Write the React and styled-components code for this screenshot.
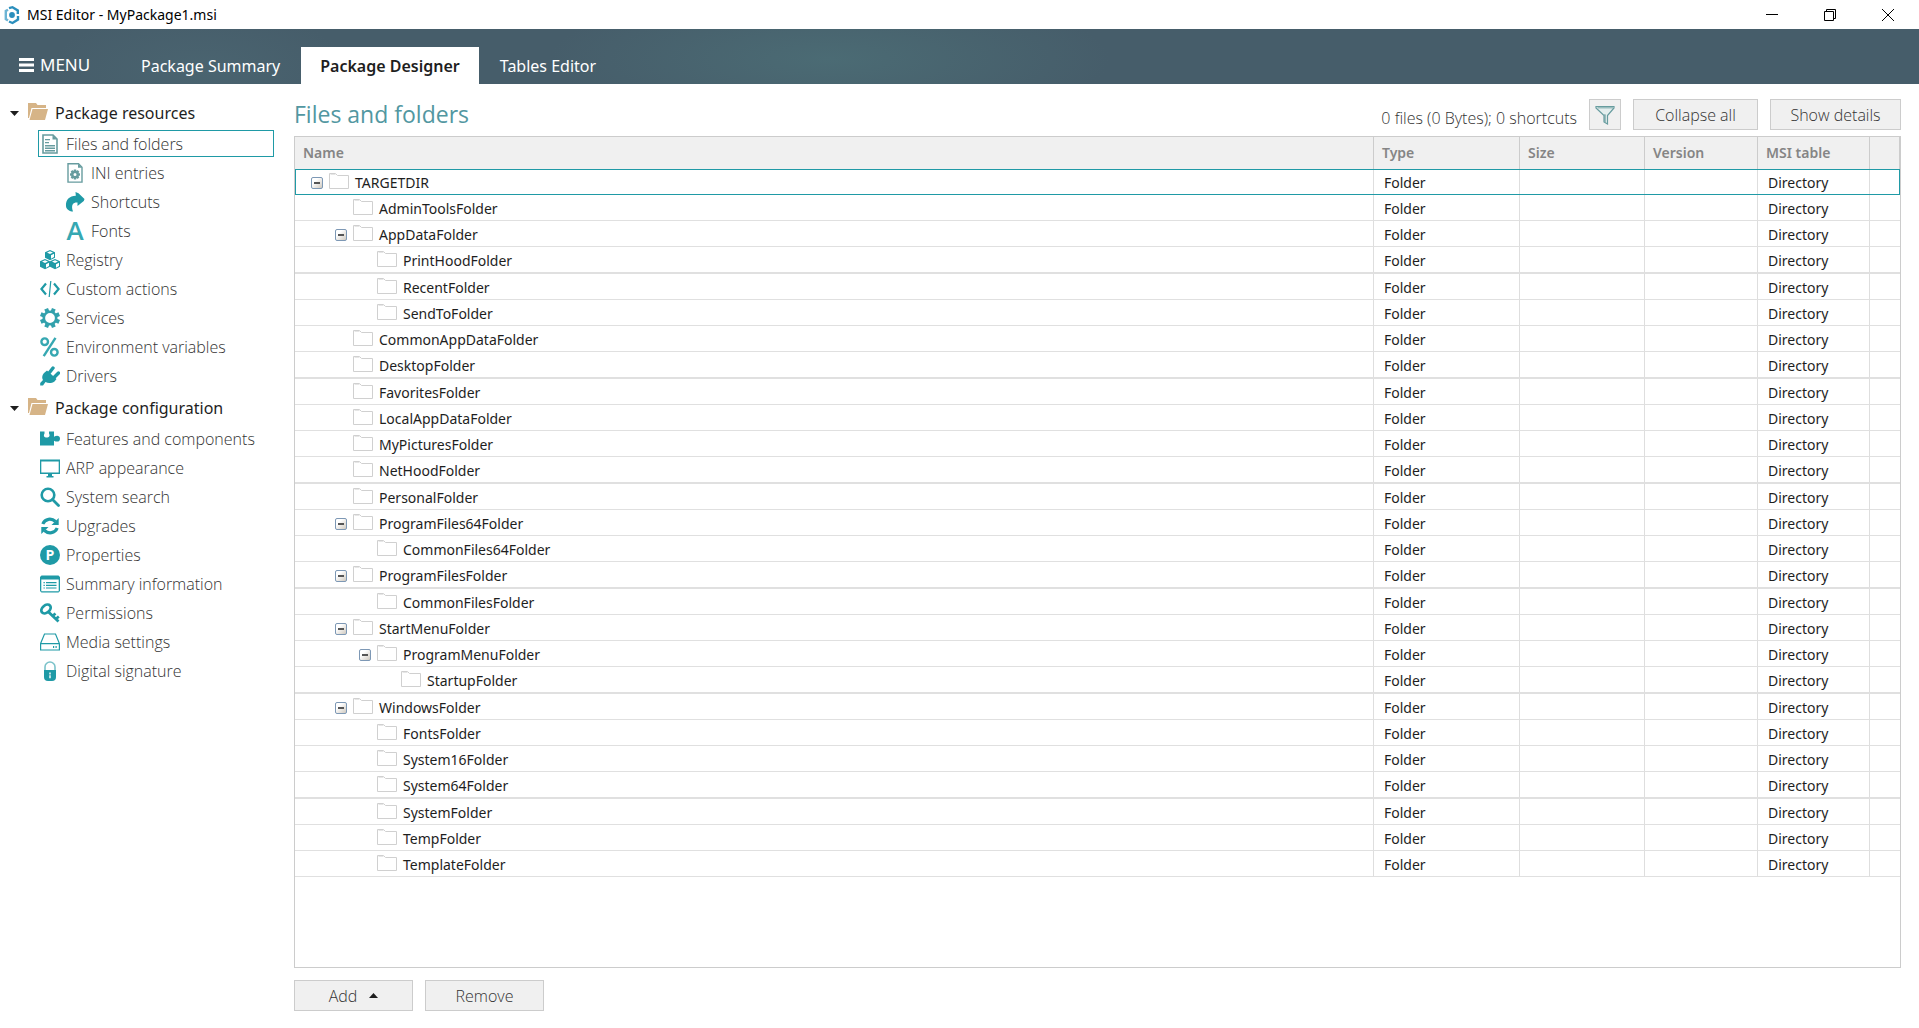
import React from "react";
import styled, { createGlobalStyle, css } from "styled-components";

const teal = "#1f9aa6";
const muted = "#679c9f";
const line = "#cccccc";
const regular = `"Noto Sans", "Open Sans", sans-serif`;
const light = `"Open Sans", "Noto Sans", sans-serif`;

const GlobalStyle = createGlobalStyle`
  * { box-sizing: border-box; }
  body { margin: 0; background: #fff; color: #1e1e1e; font: 400 14px/20px ${regular}; }
  button { font: inherit; color: inherit; padding: 0; border: 0; background: none; }
  svg { display: block; flex: none; }
`;

/* ---------- window frame ---------- */

const Window = styled.div`
  display: flex;
  flex-direction: column;
  min-height: 100vh;
`;

const TitleBar = styled.div`
  display: flex;
  align-items: center;
  gap: 7px;
  height: 29px;
  padding: 0 2px 0 4px;
  color: #000;
`;

const WindowTitle = styled.span`
  flex: 1;
`;

const WindowControls = styled.div`
  display: flex;
  align-self: stretch;
`;

const WindowButton = styled.button`
  display: flex;
  align-items: center;
  justify-content: center;
  width: 58px;
`;

const Ribbon = styled.header`
  display: flex;
  align-items: flex-end;
  height: 55px;
  background:
    radial-gradient(ellipse 280px 70px at 830px 30px, #4b6b74, #4b6b7400),
    radial-gradient(ellipse 150px 60px at 200px 40px, #4a6470, #4a647000),
    #465d6a;
  color: #fff;
`;

const MenuButton = styled.button`
  display: flex;
  align-items: center;
  gap: 6px;
  width: 122px;
  height: 39px;
  padding-left: 19px;
  font-size: 17px;
`;

const Tabs = styled.nav`
  display: flex;
  gap: 2px;
`;

const Tab = styled.a`
  height: 37px;
  padding: 1px 19px 0 19px;
  font-size: 16px;
  line-height: 36px;
  text-decoration: none;
  color: ${(p) => (p.$active ? "#1e1e1e" : "#fff")};
  background: ${(p) => (p.$active ? "#fff" : "transparent")};
  font-weight: ${(p) => (p.$active ? 600 : 400)};
`;

const Body = styled.div`
  display: flex;
  flex: 1;
`;

/* ---------- sidebar ---------- */

const Sidebar = styled.nav`
  flex: 0 0 294px;
  padding-top: 13px;
`;

const Group = styled.section`
  & + & { margin-top: 2px; }
`;

const GroupHeader = styled.button`
  display: flex;
  align-items: center;
  height: 32px;
  padding-left: 10px;
  font-size: 16px;
`;

const FolderSlot = styled.span`
  padding: 0 7px 4px 9px;
`;

const NavList = styled.ul`
  margin: 0;
  padding: 0 20px 0 38px;
  list-style: none;
`;

const NavItem = styled.li`
  display: flex;
  align-items: center;
  height: 29px;
`;

const NavLink = styled.a`
  display: flex;
  flex: 1;
  align-items: center;
  gap: 6px;
  height: 27px;
  padding-left: ${(p) => (p.$nested ? 26 : 1)}px;
  border: 1px solid ${(p) => (p.$active ? teal : "transparent")};
  color: #333;
  font: 300 16px/24px ${light};
  text-decoration: none;
`;

/* ---------- content ---------- */

const Content = styled.main`
  display: flex;
  flex: 1;
  flex-direction: column;
  min-width: 0;
  padding: 15px 18px 17px 0;
`;

const Toolbar = styled.div`
  display: flex;
  gap: 12px;
  height: 31px;
  margin-bottom: 6px;
`;

const Heading = styled.h1`
  flex: 1;
  margin: 0;
  color: #5297a1;
  font: 400 23px/31px ${light};
`;

const Summary = styled.p`
  align-self: flex-end;
  margin: 0;
  color: #333;
  font: 300 16px/24px ${light};
`;

const Button = styled.button`
  display: flex;
  align-items: center;
  justify-content: center;
  gap: 12px;
  width: ${(p) => p.$width}px;
  height: 31px;
  border: 1px solid ${line};
  background: #f0f0f0;
  && { font: 300 16px/24px ${light}; color: #333; }
`;

const Grid = styled.div`
  flex: 1;
  border: 1px solid ${line};
`;

const Table = styled.table`
  width: 100%;
  table-layout: fixed;
  border-collapse: separate;
  border-spacing: 0;
`;

const Col = styled.col`
  width: ${(p) => (p.$width ? `${p.$width}px` : "auto")};
`;

const HeadCell = styled.th`
  height: 32px;
  padding: 0 8px;
  border-right: 1px solid ${line};
  background: #f0f0f0;
  color: #858585;
  font-weight: 600;
  text-align: left;
`;

const Row = styled.tr`
  height: 26px;
  &:nth-child(4n) { height: 27px; }
  &:nth-child(4n) > td { border-bottom-width: 2px; }
  ${(p) =>
    p.$selected &&
    css`
      outline: 1px solid ${teal};
      outline-offset: -1px;
    `}
`;

const Cell = styled.td`
  padding: 2px 10px 0;
  border-right: 1px solid #dedede;
  border-bottom: 1px solid #e0e0e0;
  &:last-child { border-right: 0; }
`;

const NameCell = styled.div`
  display: flex;
  align-items: center;
  padding-left: ${(p) => p.$level * 24 + 6}px;
`;

const Expander = styled.button`
  display: flex;
  align-items: center;
  justify-content: center;
  width: 12px;
  height: 12px;
  border: 1px solid #7d98b5;
  border-radius: 2px;
  background: linear-gradient(135deg, #fff 30%, #cfc9bf);
`;

const Minus = styled.span`
  width: 6px;
  height: 2px;
  background: #555;
`;

const NoExpander = styled.span`
  width: 12px;
`;

const RowIcon = styled.span`
  padding: 0 6px 4px;
`;

const Footer = styled.div`
  display: flex;
  gap: 12px;
  margin-top: 12px;
`;

/* ---------- icons ---------- */

const Icon = ({ children, color = teal }) => (
  <svg width="20" height="20" viewBox="0 0 20 20" fill={color} aria-hidden="true">
    {children}
  </svg>
);

const Logo = () => (
  <svg width="16" height="20" viewBox="0 0 16 20" fill="none" stroke="#2b8fbd" strokeWidth="2.4" aria-hidden="true">
    <path d="M5 3.200L8.500 2.200 13.800 5.500V9" />
    <path d="M14 11v3.500L8.500 18 5 16.500" />
    <path d="M4 15.500L1.800 14V6L4 4.700" stroke="#6cb4d4" />
    <circle cx="8" cy="10" r="2.900" fill="#2b8fbd" stroke="none" />
  </svg>
);

const OpenFolder = () => (
  <svg width="20" height="17" viewBox="0 0 20 17" fill="#d6b487" aria-hidden="true">
    <path d="M0 0h8l1.500 2H18v3H3.500L1 15H0z" />
    <path d="M4.500 6H20L17 17H1.500z" />
  </svg>
);

const FolderIcon = () => (
  <svg width="20" height="16" viewBox="0 0 20 16" fill="none" stroke="#d0d0d0" aria-hidden="true">
    <path d="M.5 15.500V.5h6l2 2h11v13z" />
    <path d="M1.500 1.500h5" stroke="#e6e6e6" />
  </svg>
);

const Arrow = ({ up }) => (
  <svg width="9" height="5" viewBox="0 0 9 5" fill="#1e1e1e" aria-hidden="true">
    <path d={up ? "M0 5L4.500 0L9 5z" : "M0 0h9L4.500 5z"} />
  </svg>
);

const Burger = () => (
  <svg width="15" height="14" viewBox="0 0 15 14" fill="#fff" aria-hidden="true">
    <path d="M0 0h15v3H0zM0 5.500h15v3H0zM0 11h15v3H0z" />
  </svg>
);

const FilterIcon = () => (
  <svg width="20" height="20" viewBox="0 0 20 20" fill="none" stroke={muted} aria-hidden="true">
    <path d="M1 1.500h18v1.500l-6.500 7.500v8.500l-3.500-2v-6.500L1 3z" strokeWidth="1.200" fill="#e4eeee" />
    <path d="M2 1.500h16v2H3zM9 9l2 .5v8l-2-1z" fill={muted} stroke="none" opacity=".6" />
  </svg>
);

const Cube = ({ x, y }) => (
  <g transform={`translate(${x} ${y})`}>
    <path d="M5 0L10 2.300v5.400L5 10.200 0 7.700V2.300z" />
    <path d="M5 1.200l3 1.300L5 3.900 2 2.500zM6 5.200l3-1.500v3.300L6 8.700z" fill="#fff" />
  </g>
);

const teeth = [0, 45, 90, 135, 180, 225, 270, 315];

const icons = {
  files: (
    <Icon color={muted}>
      <path d="M3 1h10l4 4v14H3z" fill="#fff" stroke={muted} strokeWidth="1.600" />
      <path d="M12.500 1v4.500H17zM5 5h5v1.200H5zM5 8h4v1.200H5zM5 11h10v1.400H5zM5 13.500h10v1.400H5zM5 16h10v1.400H5z" />
    </Icon>
  ),
  ini: (
    <Icon color={muted}>
      <path d="M3 .8h10.500l3.500 3.500v14.800H3z" fill="#fff" stroke={muted} strokeWidth="1.400" />
      <path d="M13 .7v4h4z" />
      {teeth.map((a) => (
        <rect key={a} x="8.800" y="6.500" width="2.400" height="3" transform={`rotate(${a} 10 11.500)`} />
      ))}
      <circle cx="10" cy="11.500" r="2.700" fill="#fff" stroke={muted} strokeWidth="2.400" />
    </Icon>
  ),
  shortcuts: (
    <Icon>
      <path d="M10.500 0l3 1.200L19.500 7 18.800 9 12.500 14V10.500C8.500 10.200 5.500 12.500 8 19.500 5 19.500 1 17.500 1 14 .5 8 4.500 3.800 10.800 3.800z" />
    </Icon>
  ),
  fonts: (
    <Icon color="#36a8b2">
      <text x="10" y="19" textAnchor="middle" fontFamily="Open Sans, sans-serif" fontWeight="600" fontSize="26">A</text>
    </Icon>
  ),
  registry: (
    <Icon>
      <Cube x={5} y={0} />
      <Cube x={0} y={9} />
      <Cube x={10} y={9} />
    </Icon>
  ),
  actions: (
    <Icon>
      <path d="M6 4.500L1.400 10 6 15.500M14 4.500l4.600 5.500L14 15.500" fill="none" stroke={teal} strokeWidth="2.200" />
      <path d="M10.800 2l-1.600 16" stroke={teal} strokeWidth="1.200" />
    </Icon>
  ),
  services: (
    <Icon color="#32a1ac">
      {teeth.map((a) => (
        <rect key={a} x="8" y="0" width="4" height="4.500" transform={`rotate(${a + 22.5} 10 10)`} />
      ))}
      <circle cx="10" cy="10" r="6.200" fill="#fff" stroke="#32a1ac" strokeWidth="2.600" />
    </Icon>
  ),
  env: (
    <Icon>
      <g fill="none" stroke="#36a8b2" strokeWidth="2.400">
        <circle cx="4.700" cy="4.700" r="3.300" />
        <circle cx="14.300" cy="15.300" r="3.300" />
        <path d="M15.500 .8L3.700 19.200" />
      </g>
    </Icon>
  ),
  drivers: (
    <Icon>
      <path d="M4 7l3-2.500L16.500 13l-2 2.500c-3 2-6.500 2-9 .5L3 19.500H.2V17L3 14C1.500 11.500 2.500 8.500 4 7z" />
      <path d="M9.500 6.500l3.500-4.500M14.500 11l4-4" stroke={teal} strokeWidth="3.400" strokeLinecap="round" />
    </Icon>
  ),
  features: (
    <Icon>
      <path d="M0 2.500h4.500v2C3 7 4.500 8.500 6.700 8.500S10.500 7 9 4.500v-2h5v5.200c2.500-1.500 6-1.500 6 2s-3.500 3.300-6 2V16.500H0z" />
    </Icon>
  ),
  arp: (
    <Icon>
      <path d="M0 1.500h20v14.500H0zM1.300 3.500v11h17.400v-11z" fillRule="evenodd" />
      <path d="M8 16h4v2h1.500v1.500h-7V18H8z" />
    </Icon>
  ),
  search: (
    <Icon>
      <circle cx="8" cy="8" r="6.300" fill="none" stroke={teal} strokeWidth="2.600" />
      <path d="M12.500 12.500l6 6" stroke={teal} strokeWidth="2.800" strokeLinecap="round" />
    </Icon>
  ),
  upgrades: (
    <Icon>
      <path d="M2.800 8C5 2.500 11.500 1.800 15.500 5.500M17.200 12C15 17.500 8.500 18.200 4.500 14.500" fill="none" stroke={teal} strokeWidth="3.200" />
      <path d="M18.700 2v7h-7.200zM1.300 18v-7h7.200z" />
    </Icon>
  ),
  properties: (
    <Icon>
      <circle cx="10" cy="10" r="10" />
      <text x="10" y="15" textAnchor="middle" fontFamily="Open Sans, sans-serif" fontWeight="700" fontSize="14" fill="#fff">P</text>
    </Icon>
  ),
  summary: (
    <Icon>
      <path d="M1.500 1.500h17L20 3v14l-1.500 1.500h-17L0 17V3zM1.300 5.500v11.700h17.400V5.500z" fillRule="evenodd" />
      <path d="M3.500 8h1.300v1.200H3.500zM6 8h10.500v1.200H6zM3.500 10.700h1.300v1.200H3.500zM6 10.700h10.500v1.200H6zM3.500 13.400h1.300v1.200H3.500zM6 13.400h10.500v1.200H6z" />
    </Icon>
  ),
  permissions: (
    <Icon>
      <ellipse cx="6" cy="6" rx="5.200" ry="3.600" transform="rotate(-40 6 6)" fill="none" stroke={teal} strokeWidth="2.800" />
      <path d="M8.500 9l10 9.500M12.500 13l3-2.500M15.800 16l3-2.500" stroke={teal} strokeWidth="2.800" />
    </Icon>
  ),
  media: (
    <Icon>
      <path d="M.6 11.600L4.500 2h11l3.900 9.600V18H.6zM.6 11.600h18.800" fill="none" stroke={teal} strokeWidth="1.200" />
      <path d="M13 14h1.200v2H13zM15.500 14h1.200v2h-1.200z" />
    </Icon>
  ),
  signature: (
    <Icon>
      <path d="M5 9.500V6a5 5 0 0 1 10 0v3.500" fill="none" stroke="#7cc3ca" strokeWidth="1.600" />
      <path d="M4 9h12v7a4 4 0 0 1-4 4H8a4 4 0 0 1-4-4z" />
      <path d="M9.300 11.500h1.400v2H9.300zM9.300 14.300h1.400v3H9.300z" fill="#fff" />
    </Icon>
  ),
};

/* ---------- data ---------- */

const groups = [
  {
    title: "Package resources",
    items: [
      { label: "Files and folders", icon: "files", active: true },
      { label: "INI entries", icon: "ini", nested: true },
      { label: "Shortcuts", icon: "shortcuts", nested: true },
      { label: "Fonts", icon: "fonts", nested: true },
      { label: "Registry", icon: "registry" },
      { label: "Custom actions", icon: "actions" },
      { label: "Services", icon: "services" },
      { label: "Environment variables", icon: "env" },
      { label: "Drivers", icon: "drivers" },
    ],
  },
  {
    title: "Package configuration",
    items: [
      { label: "Features and components", icon: "features" },
      { label: "ARP appearance", icon: "arp" },
      { label: "System search", icon: "search" },
      { label: "Upgrades", icon: "upgrades" },
      { label: "Properties", icon: "properties" },
      { label: "Summary information", icon: "summary" },
      { label: "Permissions", icon: "permissions" },
      { label: "Media settings", icon: "media" },
      { label: "Digital signature", icon: "signature" },
    ],
  },
];

const columns = [
  { label: "Name" },
  { label: "Type", width: 146 },
  { label: "Size", width: 125 },
  { label: "Version", width: 113 },
  { label: "MSI table", width: 112 },
  { label: "", width: 30 },
];

// [name, depth, has children]
const folders = [
  ["TARGETDIR", 0, true],
  ["AdminToolsFolder", 1],
  ["AppDataFolder", 1, true],
  ["PrintHoodFolder", 2],
  ["RecentFolder", 2],
  ["SendToFolder", 2],
  ["CommonAppDataFolder", 1],
  ["DesktopFolder", 1],
  ["FavoritesFolder", 1],
  ["LocalAppDataFolder", 1],
  ["MyPicturesFolder", 1],
  ["NetHoodFolder", 1],
  ["PersonalFolder", 1],
  ["ProgramFiles64Folder", 1, true],
  ["CommonFiles64Folder", 2],
  ["ProgramFilesFolder", 1, true],
  ["CommonFilesFolder", 2],
  ["StartMenuFolder", 1, true],
  ["ProgramMenuFolder", 2, true],
  ["StartupFolder", 3],
  ["WindowsFolder", 1, true],
  ["FontsFolder", 2],
  ["System16Folder", 2],
  ["System64Folder", 2],
  ["SystemFolder", 2],
  ["TempFolder", 2],
  ["TemplateFolder", 2],
];

const tabs = ["Package Summary", "Package Designer", "Tables Editor"];

export default function App() {
  return (
    <Window>
      <GlobalStyle />
      <TitleBar>
        <Logo />
        <WindowTitle>MSI Editor - MyPackage1.msi</WindowTitle>
        <WindowControls>
          <WindowButton aria-label="Minimize">
            <svg width="12" height="12" viewBox="0 0 12 12"><path d="M0 5h12v1H0z" /></svg>
          </WindowButton>
          <WindowButton aria-label="Restore">
            <svg width="12" height="12" viewBox="0 0 12 12" fill="none" stroke="#000">
              <path d="M.5 2.500h9v9h-9zM2.500 2.500v-2h9v9h-2" />
            </svg>
          </WindowButton>
          <WindowButton aria-label="Close">
            <svg width="12" height="12" viewBox="0 0 12 12" stroke="#000"><path d="M0 0l12 12M12 0L0 12" /></svg>
          </WindowButton>
        </WindowControls>
      </TitleBar>

      <Ribbon>
        <MenuButton><Burger />MENU</MenuButton>
        <Tabs>
          {tabs.map((t) => (
            <Tab key={t} href="#" $active={t === "Package Designer"}>{t}</Tab>
          ))}
        </Tabs>
      </Ribbon>

      <Body>
        <Sidebar>
          {groups.map((g) => (
            <Group key={g.title}>
              <GroupHeader aria-expanded="true">
                <Arrow />
                <FolderSlot><OpenFolder /></FolderSlot>
                {g.title}
              </GroupHeader>
              <NavList>
                {g.items.map((i) => (
                  <NavItem key={i.label}>
                    <NavLink href="#" $active={i.active} $nested={i.nested}>
                      {icons[i.icon]}
                      {i.label}
                    </NavLink>
                  </NavItem>
                ))}
              </NavList>
            </Group>
          ))}
        </Sidebar>

        <Content>
          <Toolbar>
            <Heading>Files and folders</Heading>
            <Summary>0 files (0 Bytes); 0 shortcuts</Summary>
            <Button $width={32} aria-label="Filter"><FilterIcon /></Button>
            <Button $width={125}>Collapse all</Button>
            <Button $width={131}>Show details</Button>
          </Toolbar>
          <Grid>
            <Table>
              <colgroup>
                {columns.map((c) => <Col key={c.label} $width={c.width} />)}
              </colgroup>
              <thead>
                <tr>
                  {columns.map((c) => <HeadCell key={c.label} scope="col">{c.label}</HeadCell>)}
                </tr>
              </thead>
              <tbody>
                {folders.map(([name, level, open]) => (
                  <Row key={name} $selected={level === 0}>
                    <Cell>
                      <NameCell $level={level}>
                        {open ? <Expander aria-label={`Collapse ${name}`}><Minus /></Expander> : <NoExpander />}
                        <RowIcon><FolderIcon /></RowIcon>
                        {name}
                      </NameCell>
                    </Cell>
                    <Cell>Folder</Cell>
                    <Cell />
                    <Cell />
                    <Cell>Directory</Cell>
                    <Cell />
                  </Row>
                ))}
              </tbody>
            </Table>
          </Grid>
          <Footer>
            <Button $width={119}>Add <Arrow up /></Button>
            <Button $width={119}>Remove</Button>
          </Footer>
        </Content>
      </Body>
    </Window>
  );
}
